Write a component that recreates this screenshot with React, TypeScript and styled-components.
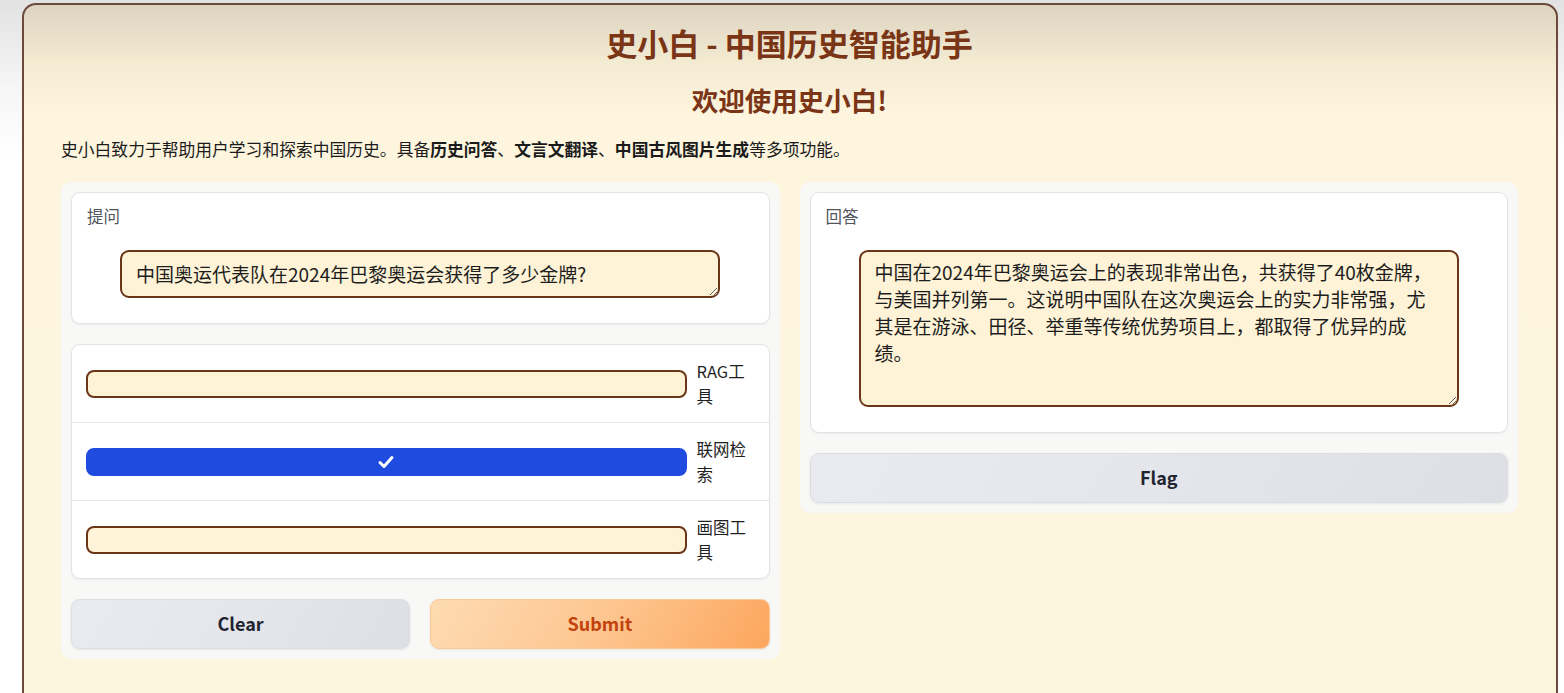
import React from "react";
import styled, { createGlobalStyle } from "styled-components";

const GlobalStyle = createGlobalStyle`
  html, body { margin: 0; padding: 0; }
  body {
    background: linear-gradient(180deg, #e2e2e2 0px, #f6f6f6 90px, #ffffff 160px);
    font-family: "Noto Sans CJK SC", "Noto Sans", sans-serif;
    overflow: hidden;
  }
  * { box-sizing: border-box; }
`;

const Page = styled.div`
  padding: 3px 6px 0 22px;
  height: 693px;
`;

const Frame = styled.main`
  min-height: 760px;
  border: 2px solid #6c4a3b;
  border-radius: 14px;
  background: linear-gradient(180deg, #dcd4c1 0px, #f3ead2 55px, #fdf5de 110px, #fdf6df 100%);
  padding: 17px 38px 0 37px;
  display: flex;
  flex-direction: column;
`;

const Title = styled.h1`
  margin: 0;
  text-align: center;
  font-size: 31px;
  line-height: 42px;
  font-weight: 700;
  color: #7a3516;
`;

const Subtitle = styled.h2`
  margin: 18px 0 0;
  text-align: center;
  font-size: 26.5px;
  line-height: 36px;
  font-weight: 700;
  color: #7a3516;
`;

const Intro = styled.p`
  margin: 19px 0 0;
  font-size: 16.8px;
  line-height: 24px;
  color: #1b1b1b;
  b { font-weight: 700; }
`;

const Columns = styled.div`
  margin-top: 21px;
  display: grid;
  grid-template-columns: 1fr 1fr;
  gap: 20px;
  align-items: start;
`;

const Panel = styled.section`
  background: rgba(247, 247, 249, 0.92);
  border-radius: 10px;
  padding: 10px;
  display: flex;
  flex-direction: column;
  gap: 20px;
`;

const Block = styled.div`
  background: #ffffff;
  border: 1px solid #e3e4e8;
  border-radius: 9px;
  box-shadow: 0 1px 2px rgba(0, 0, 0, 0.05);
  padding: 13px 15px 25px;
`;

const BlockLabel = styled.div`
  font-size: 16.5px;
  line-height: 20px;
  color: #52555c;
  margin-bottom: 24px;
`;

const Field = styled.textarea<{ $h: number }>`
  display: block;
  width: 600px;
  margin: 0 0 0 33px;
  height: ${(p) => p.$h}px;
  background: #fef3d6;
  border: 2px solid #6b3518;
  border-radius: 9px;
  padding: 8px 14px 7px;
  font-family: "Noto Sans CJK SC", sans-serif;
  font-size: 19px;
  line-height: 27px;
  color: #1d1d1d;
  resize: vertical;
  outline: none;
  &.answer { padding-top: 6px; }
`;

const Group = styled.div`
  background: #ffffff;
  border: 1px solid #e3e4e8;
  border-radius: 9px;
  box-shadow: 0 1px 2px rgba(0, 0, 0, 0.05);
  display: flex;
  flex-direction: column;
`;

const OptionRow = styled.label`
  display: flex;
  align-items: center;
  height: 77px;
  padding: 0 16px 0 14px;
  gap: 10px;
  & + & { border-top: 1px solid #e5e6ea; height: 78px; }
`;

const Box = styled.span<{ $on: boolean }>`
  flex: 1;
  height: 28px;
  border-radius: 8px;
  display: flex;
  align-items: center;
  justify-content: center;
  background: ${(p) => (p.$on ? "#1f4be0" : "#fef3d6")};
  border: 2px solid ${(p) => (p.$on ? "#1f4be0" : "#6b3518")};
`;

const OptionText = styled.span`
  width: 56px;
  font-size: 16.5px;
  line-height: 25px;
  color: #1f1f1f;
`;

const ButtonRow = styled.div`
  display: grid;
  grid-template-columns: 1fr 1fr;
  gap: 20px;
`;

const Btn = styled.button<{ $primary?: boolean }>`
  height: 50px;
  border-radius: 9px;
  font-family: "Noto Sans CJK SC", sans-serif;
  font-size: 18px;
  font-weight: 700;
  line-height: 1;
  padding: 0 0 3px;
  cursor: pointer;
  border: 1px solid ${(p) => (p.$primary ? "#fdc795" : "#dcdde2")};
  color: ${(p) => (p.$primary ? "#c2410c" : "#1f2430")};
  background: ${(p) =>
    p.$primary
      ? "linear-gradient(120deg, #fedbb3 0%, #fdc690 50%, #fca65d 100%)"
      : "linear-gradient(120deg, #e9ebf0 0%, #e4e6eb 50%, #dddfe4 100%)"};
  box-shadow: 0 1px 3px rgba(0, 0, 0, 0.08);
`;

const CheckMark = () => (
  <svg width="18" height="16" viewBox="0 0 18 16" aria-hidden>
    <path d="M3 8.5l4 4L15 3.5" fill="none" stroke="#ffffff" strokeWidth="3" strokeLinecap="round" strokeLinejoin="round" />
  </svg>
);

const options = [
  { label: "RAG工具", on: false },
  { label: "联网检索", on: true },
  { label: "画图工具", on: false },
];

export default function App() {
  return (
    <>
      <GlobalStyle />
      <Page>
        <Frame>
          <Title>史小白 - 中国历史智能助手</Title>
          <Subtitle>欢迎使用史小白!</Subtitle>
          <Intro>
            史小白致力于帮助用户学习和探索中国历史。具备<b>历史问答</b>、<b>文言文翻译</b>、<b>中国古风图片生成</b>等多项功能。
          </Intro>
          <Columns>
            <Panel>
              <Block>
                <BlockLabel>提问</BlockLabel>
                <Field $h={48} defaultValue="中国奥运代表队在2024年巴黎奥运会获得了多少金牌?" />
              </Block>
              <Group>
                {options.map((o) => (
                  <OptionRow key={o.label}>
                    <Box $on={o.on}>{o.on && <CheckMark />}</Box>
                    <OptionText>{o.label}</OptionText>
                  </OptionRow>
                ))}
              </Group>
              <ButtonRow>
                <Btn>Clear</Btn>
                <Btn $primary>Submit</Btn>
              </ButtonRow>
            </Panel>
            <Panel>
              <Block>
                <BlockLabel>回答</BlockLabel>
                <Field
                  className="answer"
                  $h={157}
                  readOnly
                  defaultValue="中国在2024年巴黎奥运会上的表现非常出色，共获得了40枚金牌，与美国并列第一。这说明中国队在这次奥运会上的实力非常强，尤其是在游泳、田径、举重等传统优势项目上，都取得了优异的成绩。"
                />
              </Block>
              <Btn>Flag</Btn>
            </Panel>
          </Columns>
        </Frame>
      </Page>
    </>
  );
}
